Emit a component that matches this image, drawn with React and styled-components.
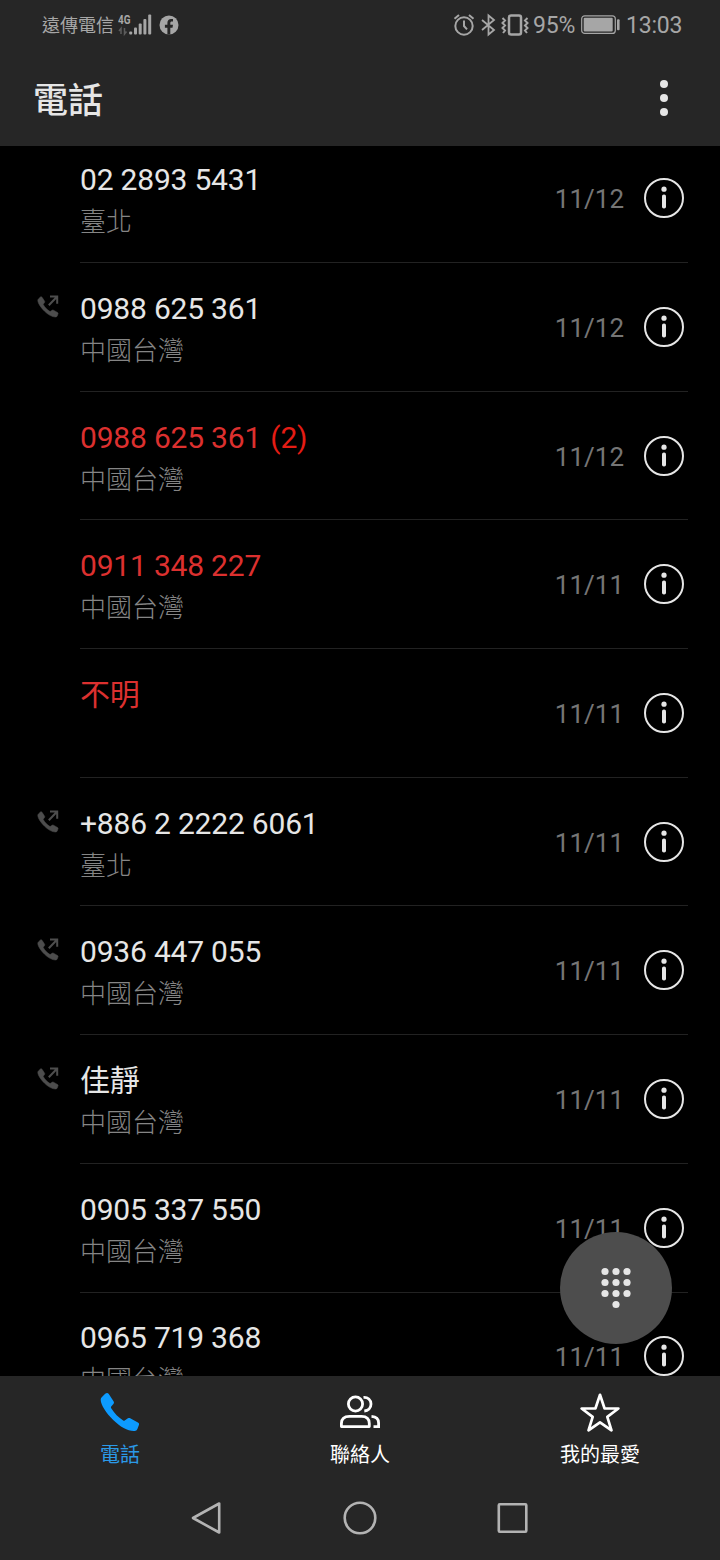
import React from "react";
import styled, { createGlobalStyle } from "styled-components";

const GlobalStyle = createGlobalStyle`
  * { box-sizing: border-box; }
  body {
    margin: 0;
    background: #000;
    font-family: Roboto, "Noto Sans CJK TC", sans-serif;
  }
`;

const Screen = styled.div`
  width: 720px;
  height: 1560px;
  display: flex;
  flex-direction: column;
  overflow: hidden;
  background: #000;
  color: #e6e6e6;
`;

const StatusBar = styled.div`
  height: 50px;
  flex: none;
  display: flex;
  justify-content: space-between;
  align-items: center;
  padding: 0 38px 0 42px;
  background: #262626;
  color: #a6a6a6;
`;

const StatusGroup = styled.div`
  display: flex;
  align-items: center;
  height: 50px;
  svg { display: block; flex: none; }
`;

const Carrier = styled.span`
  font-size: 18px;
  line-height: 26px;
  width: 76px;
  padding-top: 2px;
  white-space: nowrap;
`;

const StatusText = styled.span`
  font-size: 23px;
  line-height: 28px;
  width: ${(p) => p.$width}px;
  margin-left: ${(p) => p.$gap}px;
  letter-spacing: -0.2px;
  white-space: nowrap;
  padding-top: 2px;
`;

const Header = styled.header`
  height: 96px;
  flex: none;
  display: flex;
  justify-content: space-between;
  align-items: center;
  padding: 4px 50px 0 33px;
  background: #262626;
  svg { display: block; }
`;

const Title = styled.h1`
  margin: 0;
  padding-top: 4px;
  font-size: 35px;
  line-height: 50px;
  font-weight: 500;
`;

const CallList = styled.main`
  height: 1230px;
  flex: none;
  overflow: hidden;
  ul {
    list-style: none;
    margin: -11.7px 0 0;
    padding: 0;
  }
`;

const Row = styled.li`
  height: 128.7px;
  display: flex;
  padding-right: 32px;
`;

const Direction = styled.div`
  width: 80px;
  flex: none;
  padding: 31px 0 0 37px;
  svg { display: block; }
`;

const RowBody = styled.div`
  flex: 1;
  display: flex;
  align-items: center;
  border-bottom: 1px solid #222;
  padding-right: 4px;
`;

const Caller = styled.div`
  flex: 1;
  padding-top: 6px;
`;

const Name = styled.div`
  font-size: 30px;
  line-height: 42px;
  height: 42px;
  letter-spacing: -0.2px;
  color: ${(p) => (p.$missed ? "#dc302f" : "#e6e6e6")};
`;

const Count = styled.span`
  margin-left: 2px;
  color: #e51c14;
`;

const Place = styled.div`
  font-size: 26px;
  line-height: 43px;
  height: 42px;
  font-weight: 300;
  color: #858585;
`;

const CallDate = styled.div`
  font-size: 26px;
  line-height: 32px;
  color: #757575;
  margin: 2px 20px 0 0;
`;

const InfoIcon = styled.svg`
  width: 40px;
  height: 40px;
  display: block;
  flex: none;
`;

const DialButton = styled.button`
  position: absolute;
  left: 560px;
  top: 1232px;
  width: 112px;
  height: 112px;
  padding: 0;
  border: 0;
  border-radius: 50%;
  background: #4d4d4d;
  svg { display: block; }
`;

const TabBar = styled.nav`
  height: 100px;
  flex: none;
  display: grid;
  grid-template-columns: repeat(3, 1fr);
  background: #262626;
`;

const Tab = styled.div`
  display: flex;
  flex-direction: column;
  align-items: center;
  padding-top: 13px;
  font-size: 20px;
  line-height: 30px;
  color: ${(p) => (p.$active ? "#2b9ae8" : "#fff")};
  svg { display: block; margin-bottom: 3px; }
`;

const SystemNav = styled.div`
  height: 84px;
  flex: none;
  display: flex;
  justify-content: center;
  padding-top: 22px;
  gap: 113px;
  background: #262626;
  svg { display: block; }
`;

const HANDSET =
  "M1.500 3.700L4.500.8C5.700-.3 7.200-.3 8.100 1L12.800 8.200C13.500 9.300 13.400 10 12.700 10.900L10.500 13.500C10.100 14 10.100 14.600 10.500 15.200C13.500 20 18 24.800 22.500 27.400C23 27.700 23.500 27.700 24 27.400L27.200 25.300C28 24.800 28.700 24.800 29.500 25.200L37.200 29.600C38.300 30.300 38.600 31 38.200 32.100L36.700 36C36.200 37.300 35.300 37.900 33.900 38C27.500 38.400 19.500 33.900 12.500 27C5.500 20 .2 12 0 7C0 5.500.4 4.700 1.500 3.700Z";

const Outgoing = () => (
  <svg width="23" height="24" viewBox="0 0 23 24" fill="none">
    <g transform="translate(.8 2.800) scale(.53)">
      <path d={HANDSET} fill="#4d4d4d" stroke="#4d4d4d" />
    </g>
    <path d="M13 2.500H20.200V9.700M20.200 2.500L11.800 11.300" stroke="#4d4d4d" strokeWidth="2" />
  </svg>
);

const Info = () => (
  <InfoIcon viewBox="0 0 40 40">
    <circle cx="20" cy="20" r="19" fill="none" stroke="#e6e6e6" strokeWidth="2" />
    <circle cx="20" cy="11.200" r="2.600" fill="#e6e6e6" />
    <rect x="18" y="16.500" width="4" height="14" rx="1.800" fill="#e6e6e6" />
  </InfoIcon>
);

const Signal = () => (
  <svg width="41" height="26" viewBox="0 0 41 26" fill="#a6a6a6">
    <text x="0" y="11.500" fontFamily="Roboto" fontWeight="700" fontSize="12.500" textLength="12.500" lengthAdjust="spacingAndGlyphs">4G</text>
    <path d="M3 22V16.500L1 19M6.500 16V22L8.500 19.500" fill="none" stroke="#5c5c5c" strokeWidth="1.500" />
    <rect x="11.200" y="19.500" width="3" height="3" rx="1" />
    <rect x="16" y="15.500" width="3" height="7" rx="1" />
    <rect x="20.700" y="11.500" width="3" height="11" rx="1" />
    <rect x="25.400" y="7" width="3" height="15.500" rx="1" />
    <rect x="30.200" y="2.500" width="3" height="20" rx="1" />
  </svg>
);

const Facebook = () => (
  <svg width="20" height="20" viewBox="0 0 20 20">
    <circle cx="10" cy="10" r="9.500" fill="#a6a6a6" />
    <path d="M8.400 19.500V12.700H5.900V9.800H8.400V7.700C8.400 5.200 9.900 3.900 12.100 3.900C13.100 3.900 14 4.100 14 4.100V6.500H12.800C11.700 6.500 11.300 7.200 11.300 8V9.800H14L13.500 12.700H11.300V19.500Z" fill="#262626" />
  </svg>
);

const StatusIcons = () => (
  <svg width="80" height="26" viewBox="0 0 80 26" fill="none" stroke="#a6a6a6" strokeWidth="2">
    <circle cx="11" cy="14" r="8.700" />
    <path d="M11 8.500V14L14 17.300M1.500 6.700L6 2.900M20.500 6.700L16 2.900" />
    <path d="M29 8L41 18L35.500 22.500V3.500L41 8L29 18" strokeWidth="1.800" />
    <rect x="56" y="3.500" width="12" height="19" rx="2" strokeWidth="2.500" />
    <path d="M49.500 6L52 8.500L49.500 11L52 13.500L49.500 16L52 18.500L50 21M74.500 6L72 8.500L74.500 11L72 13.500L74.500 16L72 18.500L74 21" strokeWidth="2" />
  </svg>
);

const Battery = () => (
  <svg width="40" height="20" viewBox="0 0 40 20">
    <rect x=".7" y=".8" width="33.600" height="17.600" rx="3" fill="none" stroke="#a6a6a6" strokeWidth="1.200" />
    <rect x="2.700" y="2.800" width="29" height="13.600" rx="1" fill="#a6a6a6" />
    <rect x="36" y="4.200" width="2.600" height="11" rx="1" fill="#a6a6a6" />
  </svg>
);

const DialPad = () => (
  <svg width="112" height="112" viewBox="0 0 112 112" fill="#e6e6e6">
    {[39.500, 50.500, 61.500].map((y) =>
      [45, 56, 67].map((x) => <circle key={`${x}-${y}`} cx={x} cy={y} r="3.600" />)
    )}
    <circle cx="56" cy="72.500" r="3.600" />
  </svg>
);

const PhoneIcon = () => (
  <svg width="48" height="48" viewBox="0 0 48 48">
    <path transform="translate(4.700 4)" d={HANDSET} fill="#0d9bff" />
  </svg>
);

const ContactsIcon = () => (
  <svg width="48" height="48" viewBox="0 0 48 48" fill="none" stroke="#fff" strokeWidth="2.800">
    <circle cx="19.500" cy="15" r="7.100" />
    <path d="M5.400 37.600V34.500C5.400 29.500 9 27.400 13.500 27.400H25.500C30.500 27.400 33.300 29.800 33.300 34.500V37.600Z" strokeLinejoin="round" />
    <path d="M27.500 8.300C31.800 8 35 10.900 35 15C35 19 32 21.700 28.300 22M35.500 27.400C40 27.700 42.600 30 42.600 34V37.600H37.500" />
  </svg>
);

const StarIcon = () => (
  <svg width="48" height="48" viewBox="0 0 48 48">
    <path d="M24 5.800L28.500 19.300L42.400 19.500L31.300 27.900L35.500 41.300L24 33.300L12.500 41.300L16.700 27.900L5.600 19.500L19.500 19.300Z" fill="none" stroke="#fff" strokeWidth="2.700" strokeLinejoin="round" />
  </svg>
);

const CALLS = [
  { name: "02 2893 5431", place: "臺北", date: "11/12" },
  { name: "0988 625 361", place: "中國台灣", date: "11/12", outgoing: true },
  { name: "0988 625 361", count: 2, place: "中國台灣", date: "11/12", missed: true },
  { name: "0911 348 227", place: "中國台灣", date: "11/11", missed: true },
  { name: "不明", place: "", date: "11/11", missed: true },
  { name: "+886 2 2222 6061", place: "臺北", date: "11/11", outgoing: true },
  { name: "0936 447 055", place: "中國台灣", date: "11/11", outgoing: true },
  { name: "佳靜", place: "中國台灣", date: "11/11", outgoing: true },
  { name: "0905 337 550", place: "中國台灣", date: "11/11" },
  { name: "0965 719 368", place: "中國台灣", date: "11/11" },
];

export default function App() {
  return (
    <Screen>
      <GlobalStyle />
      <StatusBar>
        <StatusGroup>
          <Carrier>遠傳電信</Carrier>
          <Signal />
          <Facebook />
        </StatusGroup>
        <StatusGroup>
          <StatusIcons />
          <StatusText $width={48} $gap={0}>95%</StatusText>
          <Battery />
          <StatusText $width={56} $gap={5}>13:03</StatusText>
        </StatusGroup>
      </StatusBar>
      <Header>
        <Title>電話</Title>
        <svg width="12" height="40" viewBox="0 0 12 40" fill="#e6e6e6">
          <circle cx="6" cy="4" r="4" />
          <circle cx="6" cy="18" r="4" />
          <circle cx="6" cy="32" r="4" />
        </svg>
      </Header>
      <CallList>
        <ul>
          {CALLS.map((call, i) => (
            <Row key={i}>
              <Direction>{call.outgoing && <Outgoing />}</Direction>
              <RowBody>
                <Caller>
                  <Name $missed={call.missed}>
                    {call.name}
                    {call.count && <Count> ({call.count})</Count>}
                  </Name>
                  <Place>{call.place}</Place>
                </Caller>
                <CallDate>{call.date}</CallDate>
                <Info />
              </RowBody>
            </Row>
          ))}
        </ul>
      </CallList>
      <DialButton aria-label="撥號">
        <DialPad />
      </DialButton>
      <TabBar>
        <Tab $active><PhoneIcon />電話</Tab>
        <Tab><ContactsIcon />聯絡人</Tab>
        <Tab><StarIcon />我的最愛</Tab>
      </TabBar>
      <SystemNav>
        <svg width="40" height="40" viewBox="0 0 40 40" fill="none" stroke="#b3b3b3" strokeWidth="2.600">
          <path d="M32.200 5.500V34.500L6 20Z" strokeLinejoin="round" />
        </svg>
        <svg width="40" height="40" viewBox="0 0 40 40" fill="none" stroke="#b3b3b3" strokeWidth="2.600">
          <circle cx="20" cy="20" r="15.300" />
        </svg>
        <svg width="40" height="40" viewBox="0 0 40 40" fill="none" stroke="#b3b3b3" strokeWidth="2.600">
          <rect x="5.800" y="6.300" width="27.500" height="27.500" rx="1" />
        </svg>
      </SystemNav>
    </Screen>
  );
}
